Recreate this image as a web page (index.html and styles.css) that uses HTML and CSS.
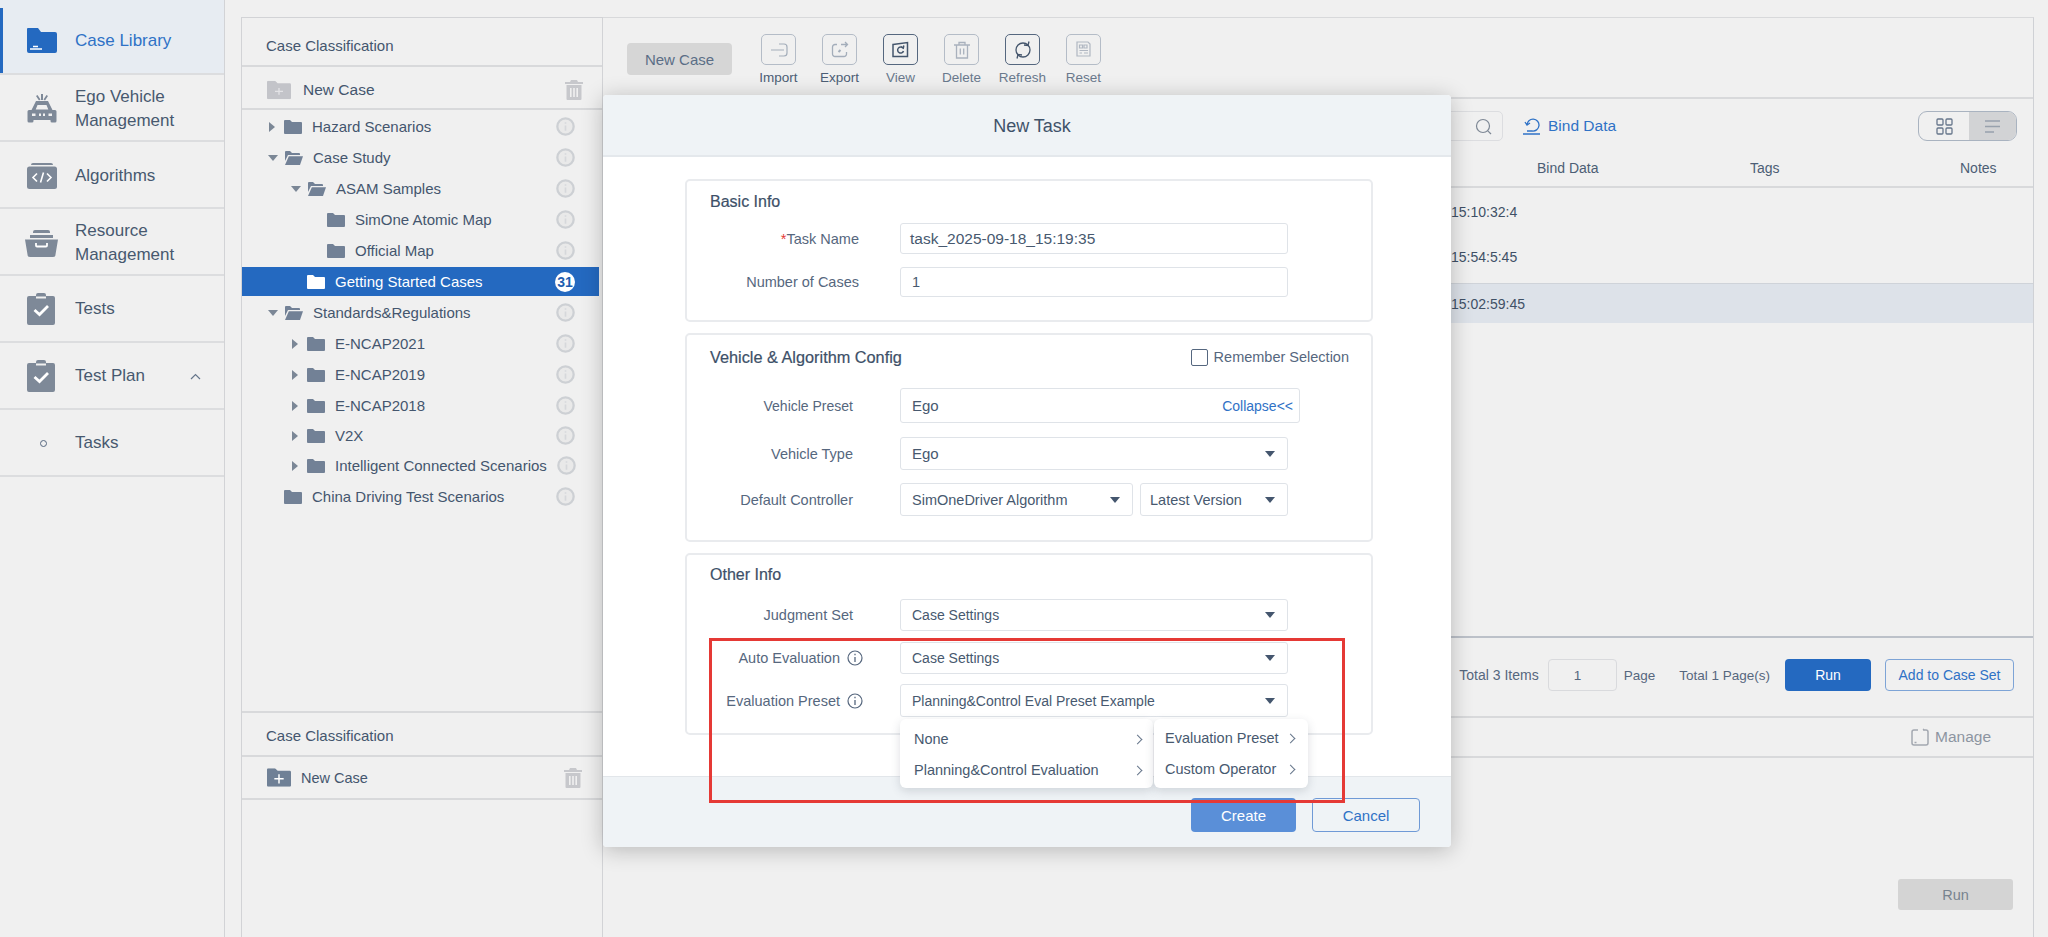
FILE: index.html
```html
<!DOCTYPE html>
<html lang="en">
<head>
  <meta charset="UTF-8">
  <meta name="viewport" content="width=device-width, initial-scale=1.0">
  <title>New Task</title>
  <link rel="stylesheet" href="styles.css">
</head>
<body>
  <!-- shared icons -->
  <svg class="icon-defs" aria-hidden="true">
    <symbol id="folder" viewBox="0 0 18 14"><path d="M1 0h5l2 2h9a1 1 0 0 1 1 1v10a1 1 0 0 1-1 1H1a1 1 0 0 1-1-1V1a1 1 0 0 1 1-1z"/></symbol>
    <symbol id="folder-open" viewBox="0 0 19 14"><path d="M1 0h5l2 2h7a1 1 0 0 1 1 1v1H4L1 10V1a1 1 0 0 1 1-1z"/><path d="M4.8 5.2H19l-3 8.8H1z"/></symbol>
    <symbol id="info" viewBox="0 0 20 20"><circle cx="10" cy="10" r="8.6" fill="#e9e9e9" stroke="#cdd0d4" stroke-width="2.4"/><path d="M10 9v5.5M10 5.4v1.6" stroke="#d6d8db" stroke-width="1.8" fill="none"/></symbol>
    <symbol id="info-line" viewBox="0 0 16 16"><circle cx="8" cy="8" r="7" fill="none" stroke="#56677e" stroke-width="1.2"/><path d="M8 7v5M8 3.8v1.5" stroke="#56677e" stroke-width="1.3" fill="none"/></symbol>
    <symbol id="trash" viewBox="0 0 18 20"><path d="M6 0h6l1 2h5v2H0V2h5z"/><path d="M1.5 5h15v14a1 1 0 0 1-1 1h-13a1 1 0 0 1-1-1zM5 8v9h1.6V8zm3.2 0v9h1.6V8zm3.2 0v9H13V8z" fill-rule="evenodd"/></symbol>
    <symbol id="clipboard" viewBox="0 0 28 32"><path d="M2 3h7V2a2 2 0 0 1 2-2h6a2 2 0 0 1 2 2v1h7a2 2 0 0 1 2 2v25a2 2 0 0 1-2 2H2a2 2 0 0 1-2-2V5a2 2 0 0 1 2-2z"/><path d="M9 3.5h10v2H9z" fill="#f0f0f0"/><path d="M7.5 17l5 4.5 8.500-8.500" fill="none" stroke="#fff" stroke-width="2.800"/></symbol>
  </svg>

  <div class="app">
    <aside class="sidebar">
      <a class="nav-item active">
        <svg class="nav-icon" width="30" height="25" viewBox="0 0 30 25"><path fill="#2469c0" d="M1 0h10l3 4h14a2 2 0 0 1 2 2v17a2 2 0 0 1-2 2H2a2 2 0 0 1-2-2V1a1 1 0 0 1 1-1z"/><path d="M3 21h12M6 18.500h5" stroke="#fff" stroke-width="1.400"/></svg>
        <span>Case Library</span>
      </a>
      <a class="nav-item">
        <svg class="nav-icon" width="30" height="30" viewBox="0 0 30 30"><path fill="#7e8998" d="M14 0h2v6h-2zM9 2l1.500-1 3 4.500-1.500 1zM21 2l-1.500-1-3 4.500 1.500 1z"/><path fill="#7e8998" d="M9 7h12l4.500 9H28a1.500 1.500 0 0 1 1.500 1.500V27a1.500 1.500 0 0 1-1.500 1.500h-3a1.500 1.500 0 0 1-1.500-1.500v-1h-17v1A1.500 1.500 0 0 1 5 28.500H2A1.500 1.500 0 0 1 .5 27v-9.500A1.500 1.500 0 0 1 2 16h2.500z"/><path fill="#f0f0f0" d="M10.500 11h9l1.800 4.500H8.700zM5 19.500h3.500v2.500H5zM12 19.500h2v2.500h-2zM16 19.500h2v2.500h-2zM21.500 19.500H25v2.500h-3.500z"/></svg>
        <span>Ego Vehicle<br>Management</span>
      </a>
      <a class="nav-item">
        <svg class="nav-icon" width="30" height="26" viewBox="0 0 30 26"><path fill="#7e8998" d="M6 0h18a2 2 0 0 1 2 2H4a2 2 0 0 1 2-2z"/><rect y="3.500" width="30" height="22.500" rx="2.500" fill="#7e8998"/><path d="M10 10.500l-4 4 4 4M20 10.500l4 4-4 4M16.500 9.500l-3 10" fill="none" stroke="#fff" stroke-width="1.600"/></svg>
        <span>Algorithms</span>
      </a>
      <a class="nav-item">
        <svg class="nav-icon wide" width="33" height="27" viewBox="0 0 33 27"><path fill="#7e8998" d="M10 0h13a2 2 0 0 1 2 2v1H8V2a2 2 0 0 1 2-2zM5 5h23v3H5zM0 9.500h33l-2.500 15a2.500 2.500 0 0 1-2.500 2.500H5a2.500 2.500 0 0 1-2.500-2.500z"/><path d="M11 13v2.500a1 1 0 0 0 1 1h9a1 1 0 0 0 1-1V13" fill="none" stroke="#fff" stroke-width="1.800"/></svg>
        <span>Resource<br>Management</span>
      </a>
      <a class="nav-item">
        <svg class="nav-icon" width="28" height="32" fill="#7e8998"><use href="#clipboard"/></svg>
        <span>Tests</span>
      </a>
      <a class="nav-item">
        <svg class="nav-icon" width="28" height="32" fill="#7e8998"><use href="#clipboard"/></svg>
        <span>Test Plan</span>
        <svg class="nav-chevron" width="11" height="7" viewBox="0 0 11 7"><path d="M1 6l4.500-4.500L10 6" fill="none" stroke="#66768b" stroke-width="1.200"/></svg>
      </a>
      <a class="nav-item">
        <i class="nav-dot"></i>
        <span>Tasks</span>
      </a>
    </aside>

    <section class="case-panel">
      <div class="panel-title">Case Classification</div>
      <div class="panel-action">
        <svg class="add-folder" width="24" height="20" viewBox="0 0 18 14" fill="#c3c4c9"><use href="#folder"/><path d="M6 8h6M9 5.500v5" stroke="#e3e3e6" stroke-width="1"/></svg>
        <span>New Case</span>
        <svg class="trash-icon" width="18" height="20" fill="#c7c8cc"><use href="#trash"/></svg>
      </div>
      <div class="tree">
        <div class="tree-row"><i class="caret closed"></i><svg class="folder" width="18" height="14"><use href="#folder"/></svg><span>Hazard Scenarios</span><svg class="info" width="19" height="19"><use href="#info"/></svg></div>
        <div class="tree-row"><i class="caret open"></i><svg class="folder" width="19" height="14"><use href="#folder-open"/></svg><span>Case Study</span><svg class="info" width="19" height="19"><use href="#info"/></svg></div>
        <div class="tree-row level-1"><i class="caret open"></i><svg class="folder" width="19" height="14"><use href="#folder-open"/></svg><span>ASAM Samples</span><svg class="info" width="19" height="19"><use href="#info"/></svg></div>
        <div class="tree-row level-2"><i class="caret"></i><svg class="folder" width="18" height="14"><use href="#folder"/></svg><span>SimOne Atomic Map</span><svg class="info" width="19" height="19"><use href="#info"/></svg></div>
        <div class="tree-row level-2"><i class="caret"></i><svg class="folder" width="18" height="14"><use href="#folder"/></svg><span>Official Map</span><svg class="info" width="19" height="19"><use href="#info"/></svg></div>
        <div class="tree-row level-1 selected"><i class="caret"></i><svg class="folder" width="18" height="14"><use href="#folder"/></svg><span>Getting Started Cases</span><b class="count">31</b></div>
        <div class="tree-row"><i class="caret open"></i><svg class="folder" width="19" height="14"><use href="#folder-open"/></svg><span>Standards&amp;Regulations</span><svg class="info" width="19" height="19"><use href="#info"/></svg></div>
        <div class="tree-row level-1"><i class="caret closed"></i><svg class="folder" width="18" height="14"><use href="#folder"/></svg><span>E-NCAP2021</span><svg class="info" width="19" height="19"><use href="#info"/></svg></div>
        <div class="tree-row level-1"><i class="caret closed"></i><svg class="folder" width="18" height="14"><use href="#folder"/></svg><span>E-NCAP2019</span><svg class="info" width="19" height="19"><use href="#info"/></svg></div>
        <div class="tree-row level-1"><i class="caret closed"></i><svg class="folder" width="18" height="14"><use href="#folder"/></svg><span>E-NCAP2018</span><svg class="info" width="19" height="19"><use href="#info"/></svg></div>
        <div class="tree-row level-1 tight"><i class="caret closed"></i><svg class="folder" width="18" height="14"><use href="#folder"/></svg><span>V2X</span><svg class="info" width="19" height="19"><use href="#info"/></svg></div>
        <div class="tree-row level-1"><i class="caret closed"></i><svg class="folder" width="18" height="14"><use href="#folder"/></svg><span>Intelligent Connected Scenarios</span><svg class="info" width="19" height="19"><use href="#info"/></svg></div>
        <div class="tree-row"><i class="caret"></i><svg class="folder" width="18" height="14"><use href="#folder"/></svg><span>China Driving Test Scenarios</span><svg class="info" width="19" height="19"><use href="#info"/></svg></div>
      </div>
      <div class="panel-lower">
        <div class="panel-title lower">Case Classification</div>
        <div class="panel-action lower">
          <svg class="add-folder" width="24" height="19" viewBox="0 0 18 14" fill="#6f8096"><use href="#folder"/><path d="M5.500 8h7M9 4.500v7" stroke="#fff" stroke-width="1.100"/></svg>
          <span>New Case</span>
          <svg class="trash-icon" width="18" height="20" fill="#c7c8cc"><use href="#trash"/></svg>
        </div>
      </div>
    </section>

    <main class="content">
      <div class="toolbar">
        <button class="btn-new">New Case</button>
        <div class="tool">
          <span class="tool-box"><svg width="18" height="14" viewBox="0 0 18 14" fill="none" stroke="#a3adba" stroke-width="1.200"><path d="M1 7h13M9 1h5a3 3 0 0 1 3 3v6a3 3 0 0 1-3 3H9"/></svg></span>
          <span class="tool-label">Import</span>
        </div>
        <div class="tool">
          <span class="tool-box"><svg width="18" height="17" viewBox="0 0 18 17" fill="none" stroke="#a3adba" stroke-width="1.300"><path d="M6 3.500H4a2.500 2.500 0 0 0-2.500 2.500v7A2.500 2.500 0 0 0 4 15.500h9a2.500 2.500 0 0 0 2.500-2.500v-2M10 3.500h6M14 1l2.500 2.500L14 6"/><path d="M7.500 11l2-2" stroke-width="2"/></svg></span>
          <span class="tool-label">Export</span>
        </div>
        <div class="tool dark">
          <span class="tool-box"><svg width="17" height="17" viewBox="0 0 17 17" fill="none" stroke="#44556c" stroke-width="1.500"><path d="M1 3.500L15.500 1.500V15.500H1z"/><path d="M11 7.200A3 3 0 1 0 11.500 10M8.500 5.500l2.800 1.500.5-2.500"/></svg></span>
          <span class="tool-label">View</span>
        </div>
        <div class="tool">
          <span class="tool-box"><svg width="16" height="18" viewBox="0 0 16 18" fill="none" stroke="#a9b1bd" stroke-width="1.300"><path d="M0 4h16M5 4V1.500h6V4M2.500 4v13h11V4M6.300 7.500v6M9.700 7.500v6"/></svg></span>
          <span class="tool-label">Delete</span>
        </div>
        <div class="tool dark">
          <span class="tool-box"><svg width="20" height="20" viewBox="0 0 20 20" fill="none" stroke="#44556c" stroke-width="1.300"><circle cx="10" cy="10" r="7"/><path d="M16 1.500l-1 4-4-.5M4 18.500l1-4 4 .5"/></svg></span>
          <span class="tool-label">Refresh</span>
        </div>
        <div class="tool">
          <span class="tool-box"><svg width="17" height="18" viewBox="0 0 17 18" fill="none" stroke="#b0b7c2" stroke-width="1.200"><path d="M2 1h11l2 2v12H2zM4.500 4h3v3h-3zM9 4h3v3H9zM4.500 9.500H13M4.500 12h2.500M9 12h4"/></svg></span>
          <span class="tool-label">Reset</span>
        </div>
      </div>

      <div class="filter-bar">
        <div class="search"><svg width="17" height="17" viewBox="0 0 17 17" fill="none" stroke="#7d8794" stroke-width="1.200"><circle cx="8" cy="8" r="6.500"/><path d="M12.800 12.800l3.200 3.200"/></svg></div>
        <a class="bind-link"><svg width="18" height="18" viewBox="0 0 18 18" fill="none" stroke="#2f72c6" stroke-width="1.300"><path d="M4 8A6 6 0 1 1 9 14H4M2 5l2 3 3-2M0 17h17"/></svg>Bind Data</a>
        <div class="view-toggle">
          <span class="toggle-cell"><svg width="17" height="17" viewBox="0 0 17 17" fill="none" stroke="#66768b" stroke-width="1.300"><rect x="1" y="1" width="6" height="6" rx="1"/><rect x="10" y="1" width="6" height="6" rx="1"/><rect x="1" y="10" width="6" height="6" rx="1"/><rect x="10" y="10" width="6" height="6" rx="1"/></svg></span>
          <span class="toggle-cell on"><svg width="16" height="13" viewBox="0 0 16 13" fill="none" stroke="#98a1ad" stroke-width="1.300"><path d="M0 1h15M0 6.500h15M0 12h9"/></svg></span>
        </div>
      </div>

      <div class="case-table">
        <div class="table-head"><span></span><span>Bind Data</span><span>Tags</span><span>Notes</span></div>
        <div class="table-row first">15:10:32:4</div>
        <div class="table-row second">15:54:5:45</div>
        <div class="table-row current">15:02:59:45</div>
      </div>

      <div class="pager">
        <span class="page-items">Total 3 Items</span>
        <input class="page-input" value="1">
        <span class="page-word">Page</span>
        <span class="page-total">Total 1 Page(s)</span>
        <button class="btn-run">Run</button>
        <button class="btn-add">Add to Case Set</button>
      </div>

      <div class="manage-bar">
        <svg width="18" height="18" viewBox="0 0 18 18" fill="none" stroke="#a3a8b0" stroke-width="1.500"><path d="M7 2H3a2 2 0 0 0-2 2v11a2 2 0 0 0 2 2h12a2 2 0 0 0 2-2V4a2 2 0 0 0-2-2h-3M3.500 14.500h2M12 1l2 1.500"/></svg>
        <span>Manage</span>
      </div>

      <div class="run-bar"><button class="btn-disabled">Run</button></div>
    </main>

    <!-- dialog over the page -->
    <div class="modal">
      <div class="modal-head">New Task</div>
      <div class="modal-body">
        <section class="card card-basic">
          <h3 class="card-title">Basic Info</h3>
          <div class="form-row label-859 row-name">
            <label><em>*</em>Task Name</label>
            <div class="field">task_2025-09-18_15:19:35</div>
          </div>
          <div class="form-row label-859 row-count">
            <label>Number of Cases</label>
            <div class="field indent">1</div>
          </div>
        </section>

        <section class="card card-vehicle">
          <div class="card-top">
            <h3 class="card-title">Vehicle &amp; Algorithm Config</h3>
            <span class="remember"><i class="checkbox"></i>Remember Selection</span>
          </div>
          <div class="form-row row-preset">
            <label>Vehicle Preset</label>
            <div class="field preset"><span class="indent">Ego</span><a class="collapse">Collapse&lt;&lt;</a></div>
          </div>
          <div class="form-row row-type">
            <label>Vehicle Type</label>
            <div class="field select">Ego</div>
          </div>
          <div class="form-row row-controller">
            <label>Default Controller</label>
            <div class="field select algo">SimOneDriver Algorithm</div>
            <div class="field select version">Latest Version</div>
          </div>
        </section>

        <section class="card card-other">
          <h3 class="card-title">Other Info</h3>
          <div class="form-row row-judge">
            <label>Judgment Set</label>
            <div class="field select">Case Settings</div>
          </div>
          <div class="form-row row-auto">
            <label class="with-info">Auto Evaluation<svg width="16" height="16"><use href="#info-line"/></svg></label>
            <div class="field select">Case Settings</div>
          </div>
          <div class="form-row row-eval">
            <label class="with-info">Evaluation Preset<svg width="16" height="16"><use href="#info-line"/></svg></label>
            <div class="field select">Planning&amp;Control Eval Preset Example</div>
          </div>
        </section>
      </div>
      <div class="modal-foot">
        <button class="btn-create">Create</button>
        <button class="btn-cancel">Cancel</button>
      </div>

      <div class="cascade">
        <ul class="cascade-list main-list">
          <li>None<i class="arrow"></i></li>
          <li>Planning&amp;Control Evaluation<i class="arrow"></i></li>
        </ul>
        <ul class="cascade-list sub-list">
          <li>Evaluation Preset<i class="arrow"></i></li>
          <li>Custom Operator<i class="arrow"></i></li>
        </ul>
      </div>
      <div class="highlight"></div>
    </div>
  </div>
</body>
</html>
```

FILE: styles.css
```css
:root {
  --page-bg: #f0f0f0;
  --line: #d8d9db;
  --text: #44566e;
  --blue: #2469c0;
  --link: #2f72c6;
  --field-line: #dfe3e8;
}

* {
  box-sizing: border-box;
}

html, body {
  height: 100%;
}

body {
  margin: 0;
  overflow: hidden;
  background: var(--page-bg);
  color: var(--text);
  font-family: "Liberation Sans", Arial, sans-serif;
  font-size: 15px;
}

button {
  font-family: inherit;
  border: 0;
  padding: 0;
}

.icon-defs {
  display: none;
}

.app {
  position: relative;
  display: flex;
  height: 937px;
}

/* Sidebar */
.sidebar {
  width: 225px;
  flex: none;
  border-right: 1px solid #d2d3d6;
}

.nav-item {
  position: relative;
  display: grid;
  grid-template-columns: 75px 1fr auto;
  align-items: center;
  height: 67px;
  padding-top: 1px;
  border-bottom: 2px solid #dcdddf;
  font-size: 17px;
  line-height: 24px;
  color: #47596f;
}
.nav-item:first-child {
  height: 75px;
  padding-top: 8px;
}
.nav-item:nth-child(2),
.nav-item:nth-child(3),
.nav-item:nth-child(4) {
  padding-top: 3px;
}
.nav-item.active {
  background: #e7ecf2;
  color: var(--link);
}
.nav-item.active::before {
  content: "";
  position: absolute;
  left: 0;
  top: 8px;
  bottom: 0;
  width: 3px;
  background: var(--blue);
}
.nav-icon {
  margin-left: 27px;
}
.nav-icon.wide {
  margin-left: 25px;
}
.nav-chevron {
  margin-right: 23px;
}
.nav-dot {
  width: 7px;
  height: 7px;
  margin-left: 40px;
  border: 1px solid #55677f;
  border-radius: 50%;
}

/* Case classification */
.case-panel {
  display: flex;
  flex-direction: column;
  width: 362px;
  flex: none;
  margin-left: 16px;
  margin-top: 17px;
  border: 1px solid #d2d3d6;
  border-bottom: 0;
}
.panel-title {
  height: 49px;
  padding: 20px 0 0 24px;
  line-height: 16px;
  font-size: 15px;
  border-bottom: 2px solid var(--line);
}
.panel-action {
  display: flex;
  align-items: center;
  height: 43px;
  padding: 4px 19px 0 25px;
  font-size: 15.500px;
  border-bottom: 2px solid var(--line);
}
.panel-action span {
  margin-left: 12px;
}
.panel-action .trash-icon {
  margin-left: auto;
}
.panel-title.lower {
  height: 44px;
  padding-top: 15px;
}
.panel-action.lower {
  font-size: 14.500px;
  padding: 0 20px 0 25px;
}
.panel-action.lower span {
  margin-left: 10px;
}
.panel-lower {
  height: 226px;
  border-top: 2px solid var(--line);
}

.tree {
  flex: 1;
  padding-top: 1px;
}
.tree-row {
  display: flex;
  align-items: center;
  gap: 10px;
  height: 31px;
  padding-left: 27px;
  padding-right: 27px;
}
.tree-row.tight {
  height: 29px;
}
.tree-row.level-1 {
  padding-left: 50px;
}
.tree-row.level-2 {
  padding-left: 70px;
}
.tree-row .caret {
  flex: none;
  width: 15px;
  height: 0;
  margin-right: -10px;
  position: relative;
}
.caret.closed::before,
.caret.open::before {
  content: "";
  position: absolute;
  left: 0;
  border-style: solid;
  border-color: transparent;
}
.caret.closed::before {
  top: -5px;
  border-width: 5px 0 5px 6px;
  border-left-color: #7b8796;
}
.caret.open::before {
  top: -3px;
  left: -1px;
  border-width: 6px 5px 0;
  border-top-color: #7b8796;
}
.folder {
  flex: none;
  fill: #728196;
}
.tree-row > span {
  white-space: nowrap;
}
.info {
  flex: none;
  margin-left: auto;
}
.tree-row.selected {
  height: 29px;
  margin: 1px 3px 1px 0;
  padding-right: 24px;
  background: var(--blue);
  color: #fff;
}
.selected .folder {
  fill: #fff;
}
.count {
  margin-left: auto;
  width: 20px;
  height: 20px;
  border-radius: 50%;
  background: #fff;
  color: #1f5fb0;
  font-size: 14px;
  line-height: 20px;
  text-align: center;
}

/* Main area */
.content {
  display: flex;
  flex-direction: column;
  width: 1431px;
  flex: none;
  margin-top: 17px;
  border-top: 1px solid #d8d9db;
  border-right: 1px solid #cfd1d5;
}
.toolbar {
  display: flex;
  height: 81px;
  padding-left: 24px;
  border-bottom: 2px solid var(--line);
}
.btn-new {
  width: 105px;
  height: 32px;
  margin-top: 25px;
  margin-right: 16px;
  border-radius: 4px;
  background: #d6d6d6;
  color: #5b6e86;
  font-size: 15px;
}
.tool {
  display: flex;
  flex-direction: column;
  align-items: center;
  width: 61px;
  padding-top: 16px;
}
.tool-box {
  display: flex;
  align-items: center;
  justify-content: center;
  width: 35px;
  height: 31px;
  border: 1px solid #b4bcc7;
  border-radius: 5px;
}
.tool.dark .tool-box {
  border-color: #55677f;
}
.tool-label {
  margin-top: 5px;
  font-size: 13.500px;
  line-height: 16px;
  color: #6a798d;
}
.tool:nth-child(2) .tool-label,
.tool:nth-child(3) .tool-label {
  color: #4c5e75;
}

.filter-bar {
  display: flex;
  align-items: center;
  height: 51px;
  padding: 12px 16px 9px 780px;
}
.search {
  display: flex;
  align-items: center;
  justify-content: flex-end;
  width: 120px;
  height: 30px;
  padding-right: 10px;
  border: 1px solid #dcdde0;
  border-radius: 5px;
}
.bind-link {
  display: flex;
  align-items: center;
  gap: 7px;
  margin-left: 20px;
  color: var(--link);
  font-size: 15.500px;
}
.view-toggle {
  display: flex;
  margin-left: auto;
  width: 99px;
  height: 30px;
  border: 1px solid #a9b3c0;
  border-radius: 9px;
  overflow: hidden;
}
.toggle-cell {
  display: flex;
  align-items: center;
  justify-content: center;
  width: 50px;
}
.toggle-cell.on {
  flex: 1;
  background: #d2d3d5;
}

.case-table {
  height: 488px;
  border-bottom: 2px solid #bcc1c9;
  font-size: 14px;
}
.table-head {
  display: grid;
  grid-template-columns: 934px 213px 210px 1fr;
  align-items: center;
  height: 38px;
  border-bottom: 2px solid var(--line);
  color: #4c5e75;
}
.table-row {
  display: flex;
  align-items: center;
  padding-left: 848px;
  color: #3f5066;
}
.table-row.first {
  height: 48px;
}
.table-row.second {
  height: 47px;
  padding-bottom: 6px;
}
.table-row.current {
  height: 40px;
  background: #dde2e9;
  border-top: 1px solid #cfd3d9;
}

.pager {
  display: flex;
  justify-content: flex-end;
  align-items: center;
  height: 80px;
  padding: 0 19px 4px 0;
  border-bottom: 2px solid var(--line);
  font-size: 13.500px;
  color: #56677e;
}
.page-items {
  font-size: 14px;
}
.page-input {
  width: 69px;
  height: 32px;
  margin-left: 9px;
  padding: 0 0 0 25px;
  background: transparent;
  border: 1px solid #d9dadd;
  border-radius: 4px;
  color: inherit;
  font: inherit;
}
.page-word {
  margin-left: 7px;
}
.page-total {
  margin-left: 24px;
}
.btn-run {
  width: 86px;
  height: 32px;
  margin-left: 15px;
  border-radius: 4px;
  background: var(--blue);
  color: #fff;
  font-size: 14px;
}
.btn-add {
  width: 129px;
  height: 32px;
  margin-left: 14px;
  background: transparent;
  border: 1px solid #7ea4d6;
  border-radius: 4px;
  color: var(--link);
  font-size: 14px;
}

.manage-bar {
  display: flex;
  justify-content: flex-end;
  align-items: center;
  gap: 6px;
  height: 40px;
  padding-right: 42px;
  border-bottom: 2px solid var(--line);
  color: #8d95a1;
  font-size: 15.500px;
}
.run-bar {
  display: flex;
  justify-content: flex-end;
  padding: 121px 20px 0 0;
}
.btn-disabled {
  width: 115px;
  height: 31px;
  border-radius: 3px;
  background: #d4d4d4;
  color: #78838f;
  font-size: 14.500px;
}

/* New Task dialog */
.modal {
  position: absolute;
  left: 603px;
  top: 95px;
  display: flex;
  flex-direction: column;
  width: 848px;
  height: 752px;
  background: #fff;
  border-radius: 4px;
  box-shadow: 0 3px 22px rgba(0, 0, 0, 0.24);
}
.modal-head {
  height: 62px;
  flex: none;
  padding-left: 10px;
  border-bottom: 2px solid #e4e8ec;
  background: #eff3f6;
  border-radius: 4px 4px 0 0;
  font-size: 18px;
  line-height: 62px;
  text-align: center;
  color: #3f5269;
}
.modal-body {
  flex: 1;
  padding: 22px 0 0 82px;
}
.modal-foot {
  display: flex;
  justify-content: flex-end;
  gap: 16px;
  height: 71px;
  flex: none;
  padding: 21px 31px 0 0;
  border-top: 1px solid #e2e6ea;
  background: #eff3f6;
  border-radius: 0 0 4px 4px;
}
.btn-create {
  width: 105px;
  height: 34px;
  border-radius: 4px;
  background: #5a8fd8;
  color: #fff;
  font-size: 15px;
}
.btn-cancel {
  width: 108px;
  height: 34px;
  border: 1px solid #6f9ad6;
  border-radius: 4px;
  background: transparent;
  color: var(--link);
  font-size: 15px;
}

.card {
  width: 688px;
  border: 2px solid #e9ebee;
  border-radius: 5px;
  padding: 0 22px 0 23px;
  margin-bottom: 11px;
}
.card-basic {
  height: 143px;
  padding-top: 11px;
}
.card-vehicle {
  height: 209px;
  padding-top: 12px;
}
.card-other {
  height: 182px;
  padding-top: 10px;
}
.card-title {
  margin: 0;
  font-size: 16px;
  font-weight: 400;
  line-height: 20px;
  color: #3d5068;
  -webkit-text-stroke: 0.2px #3d5068;
}
.card-vehicle .card-title {
  font-size: 16.300px;
}
.card-top {
  display: flex;
  justify-content: space-between;
  align-items: center;
}
.remember {
  display: flex;
  align-items: center;
  gap: 6px;
  font-size: 14.500px;
  color: #56677e;
}
.checkbox {
  width: 17px;
  height: 17px;
  border: 1.500px solid #55677f;
  border-radius: 2px;
}

.form-row {
  display: flex;
  align-items: stretch;
  gap: 7px;
  font-size: 14.500px;
}
.form-row label {
  display: flex;
  align-items: center;
  justify-content: flex-end;
  width: 183px;
  flex: none;
  padding-right: 40px;
  color: #56677e;
  white-space: nowrap;
}
.form-row.label-859 label {
  padding-right: 34px;
}
.form-row label.with-info {
  padding-right: 30px;
  gap: 7px;
}
.form-row label em {
  color: #e53935;
  font-style: normal;
}
.row-preset label {
  font-size: 14px;
}

.row-name {
  height: 31px;
  margin-top: 11px;
}
.row-count {
  height: 30px;
  margin-top: 13px;
}
.row-preset {
  height: 35px;
  margin-top: 21px;
}
.row-type {
  height: 33px;
  margin-top: 14px;
}
.row-controller {
  height: 33px;
  margin-top: 13px;
}
.row-judge {
  height: 32px;
  margin-top: 14px;
}
.row-auto {
  height: 32px;
  margin-top: 11px;
}
.row-eval {
  height: 33px;
  margin-top: 10px;
}

.field {
  display: flex;
  align-items: center;
  position: relative;
  width: 388px;
  padding-left: 9px;
  border: 1.500px solid var(--field-line);
  border-radius: 3px;
  color: #47596f;
  font-size: 14.500px;
}
.row-name .field {
  font-size: 15.500px;
}
.field.indent {
  padding-left: 11px;
}
.field .indent {
  padding-left: 2px;
}
.field.preset {
  width: 400px;
  justify-content: space-between;
  padding-right: 6px;
  font-size: 15px;
}
.collapse {
  color: var(--link);
  font-size: 14px;
}
.field.select {
  padding-left: 11px;
}
.field.select::after {
  content: "";
  position: absolute;
  right: 12px;
  top: 50%;
  margin-top: -3px;
  border-style: solid;
  border-width: 6px 5px 0;
  border-color: #44566e transparent transparent;
}
.row-type .field.select {
  font-size: 15px;
}
.row-auto .field.select,
.row-judge .field.select,
.row-eval .field.select {
  font-size: 14px;
}
.field.algo {
  width: 233px;
}
.field.version {
  width: 148px;
  padding-left: 9px;
}

/* Cascading menu */
.cascade {
  position: absolute;
  left: 297px;
  top: 624px;
  display: flex;
  gap: 1px;
}
.cascade-list {
  display: flex;
  flex-direction: column;
  justify-content: center;
  margin: 0;
  padding: 0;
  height: 69px;
  background: #fff;
  border-radius: 6px;
  box-shadow: 0 3px 10px rgba(60, 70, 90, 0.18);
  list-style: none;
  font-size: 14.500px;
  color: #47596f;
}
.cascade-list li {
  display: flex;
  align-items: center;
  justify-content: space-between;
  height: 31px;
}
.main-list {
  width: 253px;
  padding: 2px 12px 0 14px;
}
.sub-list {
  width: 154px;
  padding: 0 14px 0 11px;
}
.arrow {
  width: 7px;
  height: 7px;
  border-top: 1px solid #66768b;
  border-right: 1px solid #66768b;
  transform: rotate(45deg);
}

.highlight {
  position: absolute;
  left: 106px;
  top: 543px;
  width: 636px;
  height: 165px;
  border: 3px solid #e53935;
}
```
